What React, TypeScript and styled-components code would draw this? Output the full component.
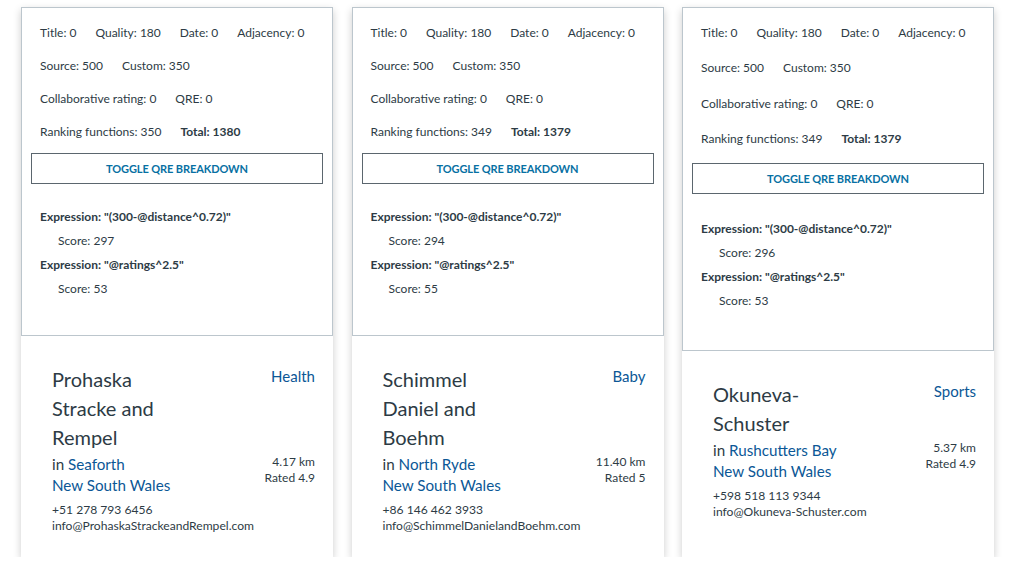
import styled, { createGlobalStyle } from 'styled-components';

const GlobalStyle = createGlobalStyle`
	body {
		margin: 0;
		background: #ffffff;
		font-family: Lato, "Open Sans", sans-serif;
		color: #2d3b45;
	}
`;

const Results = styled.div`
	display: grid;
	grid-template-columns: repeat(3, 312px);
	column-gap: 18.5px;
	align-items: stretch;
	padding: 7px 0 0 21px;
`;

const Card = styled.div`
	display: flex;
	flex-direction: column;
	background: #ffffff;
	box-shadow: 0 3px 8px rgba(0, 0, 0, 0.2);
`;

const Breakdown = styled.div`
	flex: 1 1 auto;
	display: flex;
	flex-direction: column;
	justify-content: space-between;
	padding: 8px 9px 0;
	border: 1px solid #bcc6cd;

	&::after {
		content: '';
		display: block;
		height: 34px;
	}
`;

const ScoreRow = styled.div`
	display: flex;
	gap: 19px;
	padding: 8px 9px;
	font-size: 12px;
	line-height: 17px;
`;

const ScoreItem = styled.span<{ $bold?: boolean }>`
	font-weight: ${p => (p.$bold ? 700 : 400)};
`;

const ToggleButton = styled.button`
	margin-top: 5px;
	height: 31px;
	box-sizing: border-box;
	border: 1px solid #5b666e;
	border-radius: 0;
	background: #ffffff;
	font-family: Lato, sans-serif;
	font-size: 11px;
	font-weight: 700;
	letter-spacing: -0.1px;
	color: #0770a3;
	text-transform: uppercase;
	cursor: pointer;
`;

const Expressions = styled.div`
	margin-top: 21px;
	padding: 0 9px;
	font-size: 12px;
	line-height: 24px;
`;

const Expression = styled.div`
	font-weight: 700;
`;

const ExpressionScore = styled.div`
	padding-left: 18px;
`;

const Listing = styled.div`
	flex: 1 1 auto;
	display: grid;
	grid-template-columns: 140px 1fr;
	align-content: start;
	padding: 29px 18px 23px 31px;
`;

const Name = styled.div`
	font-size: 20px;
	line-height: 29px;
	color: #2d3b45;
`;

const Category = styled.a`
	justify-self: end;
	font-size: 15px;
	line-height: 22px;
	color: #0b5796;
	text-decoration: none;
`;

const Location = styled.div`
	margin-top: 2px;
	font-size: 15.2px;
	line-height: 21px;
	white-space: nowrap;
`;

const Place = styled.a`
	color: #0b5796;
	text-decoration: none;
`;

const Stats = styled.div`
	margin-top: 2px;
	text-align: right;
	font-size: 12px;
	line-height: 16px;
`;

const Contact = styled.div`
	grid-column: 1 / -1;
	margin-top: 6px;
	font-size: 12.1px;
	line-height: 16px;
`;

type Result = {
	name: string;
	category: string;
	suburb: string;
	state: string;
	distance: string;
	rating: string;
	phone: string;
	email: string;
	ranking: number;
	total: number;
	distanceScore: number;
	ratingScore: number;
};

const results: Result[] = [
	{
		name: 'Prohaska Stracke and Rempel',
		category: 'Health',
		suburb: 'Seaforth',
		state: 'New South Wales',
		distance: '4.17 km',
		rating: 'Rated 4.9',
		phone: '+51 278 793 6456',
		email: 'info@ProhaskaStrackeandRempel.com',
		ranking: 350,
		total: 1380,
		distanceScore: 297,
		ratingScore: 53,
	},
	{
		name: 'Schimmel Daniel and Boehm',
		category: 'Baby',
		suburb: 'North Ryde',
		state: 'New South Wales',
		distance: '11.40 km',
		rating: 'Rated 5',
		phone: '+86 146 462 3933',
		email: 'info@SchimmelDanielandBoehm.com',
		ranking: 349,
		total: 1379,
		distanceScore: 294,
		ratingScore: 55,
	},
	{
		name: 'Okuneva-Schuster',
		category: 'Sports',
		suburb: 'Rushcutters Bay',
		state: 'New South Wales',
		distance: '5.37 km',
		rating: 'Rated 4.9',
		phone: '+598 518 113 9344',
		email: 'info@Okuneva-Schuster.com',
		ranking: 349,
		total: 1379,
		distanceScore: 296,
		ratingScore: 53,
	},
];

const ResultCard = ({ result }: { result: Result }) => (
	<Card>
		<Breakdown>
			<ScoreRow>
				<ScoreItem>Title: 0</ScoreItem>
				<ScoreItem>Quality: 180</ScoreItem>
				<ScoreItem>Date: 0</ScoreItem>
				<ScoreItem>Adjacency: 0</ScoreItem>
			</ScoreRow>
			<ScoreRow>
				<ScoreItem>Source: 500</ScoreItem>
				<ScoreItem>Custom: 350</ScoreItem>
			</ScoreRow>
			<ScoreRow>
				<ScoreItem>Collaborative rating: 0</ScoreItem>
				<ScoreItem>QRE: 0</ScoreItem>
			</ScoreRow>
			<ScoreRow>
				<ScoreItem>Ranking functions: {result.ranking}</ScoreItem>
				<ScoreItem $bold>Total: {result.total}</ScoreItem>
			</ScoreRow>
			<ToggleButton>Toggle QRE breakdown</ToggleButton>
			<Expressions>
				<Expression>Expression: "(300-@distance^0.72)"</Expression>
				<ExpressionScore>Score: {result.distanceScore}</ExpressionScore>
				<Expression>Expression: "@ratings^2.5"</Expression>
				<ExpressionScore>Score: {result.ratingScore}</ExpressionScore>
			</Expressions>
		</Breakdown>
		<Listing>
			<Name>{result.name}</Name>
			<Category href="#">{result.category}</Category>
			<Location>
				in <Place href="#">{result.suburb}</Place>
				<div>
					<Place href="#">{result.state}</Place>
				</div>
			</Location>
			<Stats>
				<div>{result.distance}</div>
				<div>{result.rating}</div>
			</Stats>
			<Contact>
				<div>{result.phone}</div>
				<div>{result.email}</div>
			</Contact>
		</Listing>
	</Card>
);

const App = () => (
	<>
		<GlobalStyle />
		<Results>
			{results.map(result => (
				<ResultCard key={result.name} result={result} />
			))}
		</Results>
	</>
);

export default App;
